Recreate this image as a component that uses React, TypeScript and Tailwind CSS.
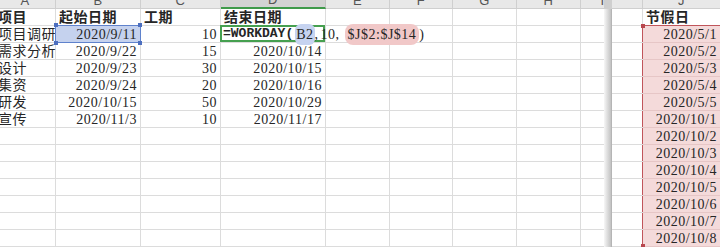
import type { ReactNode } from "react";

type Col = { id: string; w: string };

const LEFT_COLS: Col[] = [
  { id: "A", w: "w-[61px]" },
  { id: "B", w: "w-[85px]" },
  { id: "C", w: "w-[80px]" },
  { id: "D", w: "w-[105px]" },
  { id: "E", w: "w-[64px]" },
  { id: "F", w: "w-[63px]" },
  { id: "G", w: "w-[64px]" },
  { id: "H", w: "w-[64px]" },
  { id: "I", w: "w-[44px]" },
];

const TASKS = [
  ["项目调研", "2020/9/11", "10", ""],
  ["需求分析", "2020/9/22", "15", "2020/10/14"],
  ["设计", "2020/9/23", "30", "2020/10/15"],
  ["集资", "2020/9/24", "20", "2020/10/16"],
  ["研发", "2020/10/15", "50", "2020/10/29"],
  ["宣传", "2020/11/3", "10", "2020/11/17"],
];

const HOLIDAYS = [
  "2020/5/1",
  "2020/5/2",
  "2020/5/3",
  "2020/5/4",
  "2020/5/5",
  "2020/10/1",
  "2020/10/2",
  "2020/10/3",
  "2020/10/4",
  "2020/10/5",
  "2020/10/6",
  "2020/10/7",
  "2020/10/8",
];

const ROWS = 14;
const cellFont = "font-['Liberation_Serif','Noto_Sans_CJK_SC',serif] text-[14px] tracking-[0.5px] text-[#262626]";

function Handle({ pos, color }: { pos: string; color: string }) {
  return <span className={`absolute z-20 w-[4px] h-[4px] ${pos} ${color}`} />;
}

function Cell({
  w,
  align = "left",
  bold,
  className = "",
  children,
}: {
  w: string;
  align?: "left" | "right";
  bold?: boolean;
  className?: string;
  children?: ReactNode;
}) {
  return (
    <div
      className={`${w} shrink-0 h-[17px] border-r border-b border-[#dcdcdc] flex items-center whitespace-nowrap ${
        align === "right" ? "justify-end pr-[3px]" : "pl-[3px]"
      } ${bold ? "font-bold" : ""} ${className}`}
    >
      {children}
    </div>
  );
}

function ColHeader({ col, active }: { col: Col; active?: boolean }) {
  return (
    <div
      className={`${col.w} shrink-0 h-[20px] flex items-end justify-center pb-[1px] border-r border-b font-['Liberation_Sans',sans-serif] text-[13px] leading-none text-[#555] ${
        active ? "bg-[#d3d3d3] border-r-[#c4c4c4] border-b-2 border-b-[#3f9a4a]" : "bg-[#e8e8e8] border-[#cfcfcf]"
      }`}
    >
      {col.id}
    </div>
  );
}

function Formula() {
  return (
    <div className="relative z-10 flex items-center whitespace-nowrap -ml-[1px]">
      <span className="font-['Liberation_Mono',monospace] font-bold text-[13px] tracking-[0px]">=WORKDAY(</span>
      <span className="ml-[2px] px-[1px] rounded-[6px] bg-[#c6d3f0]">B2</span>
      <span>,</span>
      <span className="ml-[2px]">10,</span>
      <span className="ml-[5px] px-[3px] rounded-[8px] bg-[#f1c8c8]">$J$2:$J$14</span>
      <span>)</span>
    </div>
  );
}

function LeftPane() {
  return (
    <div className="w-[604px] shrink-0 overflow-hidden">
      <div className={`-ml-[5px] ${cellFont}`}>
        <div className="flex -mt-[11px]">
          {LEFT_COLS.map((c) => (
            <ColHeader key={c.id} col={c} active={c.id === "D"} />
          ))}
        </div>

        <div className="flex">
          <Cell w={LEFT_COLS[0].w} bold>项目</Cell>
          <Cell w={LEFT_COLS[1].w} bold>起始日期</Cell>
          <Cell w={LEFT_COLS[2].w} bold>工期</Cell>
          <Cell w={LEFT_COLS[3].w} bold>结束日期</Cell>
          {LEFT_COLS.slice(4).map((c) => (
            <Cell key={c.id} w={c.w} />
          ))}
        </div>

        {Array.from({ length: ROWS - 1 }, (_, i) => {
          const t = TASKS[i];
          return (
            <div key={i} className="flex">
              <Cell w={LEFT_COLS[0].w}>{t?.[0]}</Cell>
              <Cell w={LEFT_COLS[1].w} align="right" className={i === 0 ? "relative bg-[#c5d2ee]" : ""}>
                {t?.[1]}
                {i === 0 && (
                  <>
                    <span className="absolute -inset-[1px] -top-[1px] border border-[#5f82cc] pointer-events-none" />
                    <Handle pos="-left-[2px] -top-[3px]" color="bg-[#4d6fbf]" />
                    <Handle pos="-right-[2px] -top-[3px]" color="bg-[#4d6fbf]" />
                    <Handle pos="-left-[2px] -bottom-[3px]" color="bg-[#4d6fbf]" />
                    <Handle pos="-right-[2px] -bottom-[3px]" color="bg-[#4d6fbf]" />
                  </>
                )}
              </Cell>
              <Cell w={LEFT_COLS[2].w} align="right">{t?.[2]}</Cell>
              {i === 0 ? (
                <Cell w={LEFT_COLS[3].w} className="relative overflow-visible pl-[2px]">
                  <span className="absolute -left-[1px] -top-[1px] -right-[0px] -bottom-[0px] border-2 border-[#46a050] pointer-events-none" />
                  <Formula />
                </Cell>
              ) : (
                <Cell w={LEFT_COLS[3].w} align="right">{t?.[3]}</Cell>
              )}
              {LEFT_COLS.slice(4).map((c) => (
                <Cell key={c.id} w={c.w} />
              ))}
            </div>
          );
        })}
      </div>
    </div>
  );
}

function RightPane() {
  return (
    <div className={`flex-1 overflow-hidden ${cellFont}`}>
      <div className="flex -mt-[11px]">
        <ColHeader col={{ id: "", w: "w-[31px]" }} />
        <ColHeader col={{ id: "J", w: "w-[78px]" }} />
      </div>
      <div className="flex">
        <Cell w="w-[31px]" />
        <Cell w="w-[78px]" bold className="relative pl-[2px] border-b-[#c0555b]">
          节假日
          <Handle pos="-left-[2px] -bottom-[3px]" color="bg-[#b8474e]" />
        </Cell>
      </div>
      {HOLIDAYS.map((d, i) => (
        <div key={d} className="flex">
          <Cell w="w-[31px]" />
          <Cell
            w="w-[78px]"
            align="right"
            className={`relative bg-[#f4dada] border-b-[#e6c6c6] pr-[2px] ${i === HOLIDAYS.length - 1 ? "border-b-[#c0555b]" : ""}`}
          >
            <span className="absolute -left-[1px] top-0 bottom-0 w-[1px] bg-[#c0555b]" />
            {d}
            {i === HOLIDAYS.length - 1 && <Handle pos="-left-[2px] -bottom-[2px]" color="bg-[#b8474e]" />}
          </Cell>
        </div>
      ))}
    </div>
  );
}

export default function App() {
  return (
    <div className="w-[720px] h-[247px] overflow-hidden bg-white flex">
      <LeftPane />
      <div className="w-[8px] shrink-0 flex flex-col">
        <div className="h-[9px] bg-[#cfcfcf]" />
        <div className="flex-1 bg-linear-to-r from-[#f7f7f7] to-[#c2c2c2] border-r border-[#b5b5b5]" />
      </div>
      <RightPane />
    </div>
  );
}
